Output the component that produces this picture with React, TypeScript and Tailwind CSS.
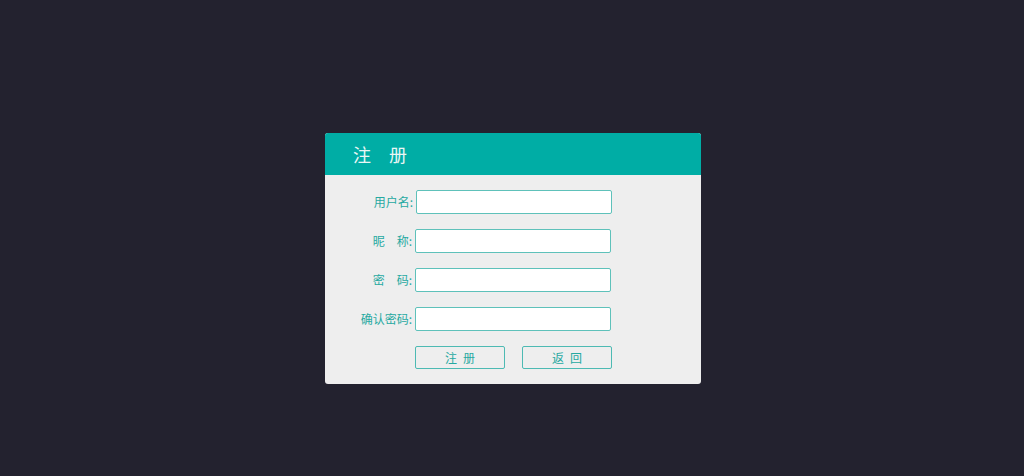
const fields = [
  { label: "用户名:", type: "text", offset: "w-[91px]" },
  { label: "昵　称:", type: "text", offset: "w-[90px]" },
  { label: "密　码:", type: "password", offset: "w-[90px]" },
  { label: "确认密码:", type: "password", offset: "w-[90px]" },
];

const App = () => {
  return (
    <div
      className="min-h-[476px] bg-[#23222f] pt-[133px] pl-[2px]"
      style={{ fontFamily: '"Noto Sans CJK SC", "Liberation Sans", sans-serif' }}
    >
      <div className="mx-auto w-[376px] overflow-hidden rounded-[3px] bg-[#eeeeee]">
        <div className="flex h-[42px] items-center bg-[#00ada5] pl-[28px] text-[18px] text-[#eaf6f5]">
          注　册
        </div>

        <form className="flex flex-col gap-[15px] pt-[15px] pb-[15px]">
          {fields.map((field) => (
            <div key={field.label} className="flex items-center">
              <label
                className={`${field.offset} pr-[3px] text-right text-[12px] text-[#26a9a1]`}
              >
                {field.label}
              </label>
              <input
                type={field.type}
                className="h-[24px] w-[196px] rounded-[2px] border border-[#5ec1ba] bg-white px-1 text-[12px] outline-none"
              />
            </div>
          ))}

          <div className="flex gap-[17px] pl-[90px]">
            <button
              type="button"
              className="h-[23px] w-[90px] rounded-[2px] border border-[#4dbab3] pl-[6px] text-[12px] tracking-[6px] text-[#26a9a1]"
            >
              注册
            </button>
            <button
              type="button"
              className="h-[23px] w-[90px] rounded-[2px] border border-[#4dbab3] pl-[6px] text-[12px] tracking-[6px] text-[#26a9a1]"
            >
              返回
            </button>
          </div>
        </form>
      </div>
    </div>
  );
};

export default App;
